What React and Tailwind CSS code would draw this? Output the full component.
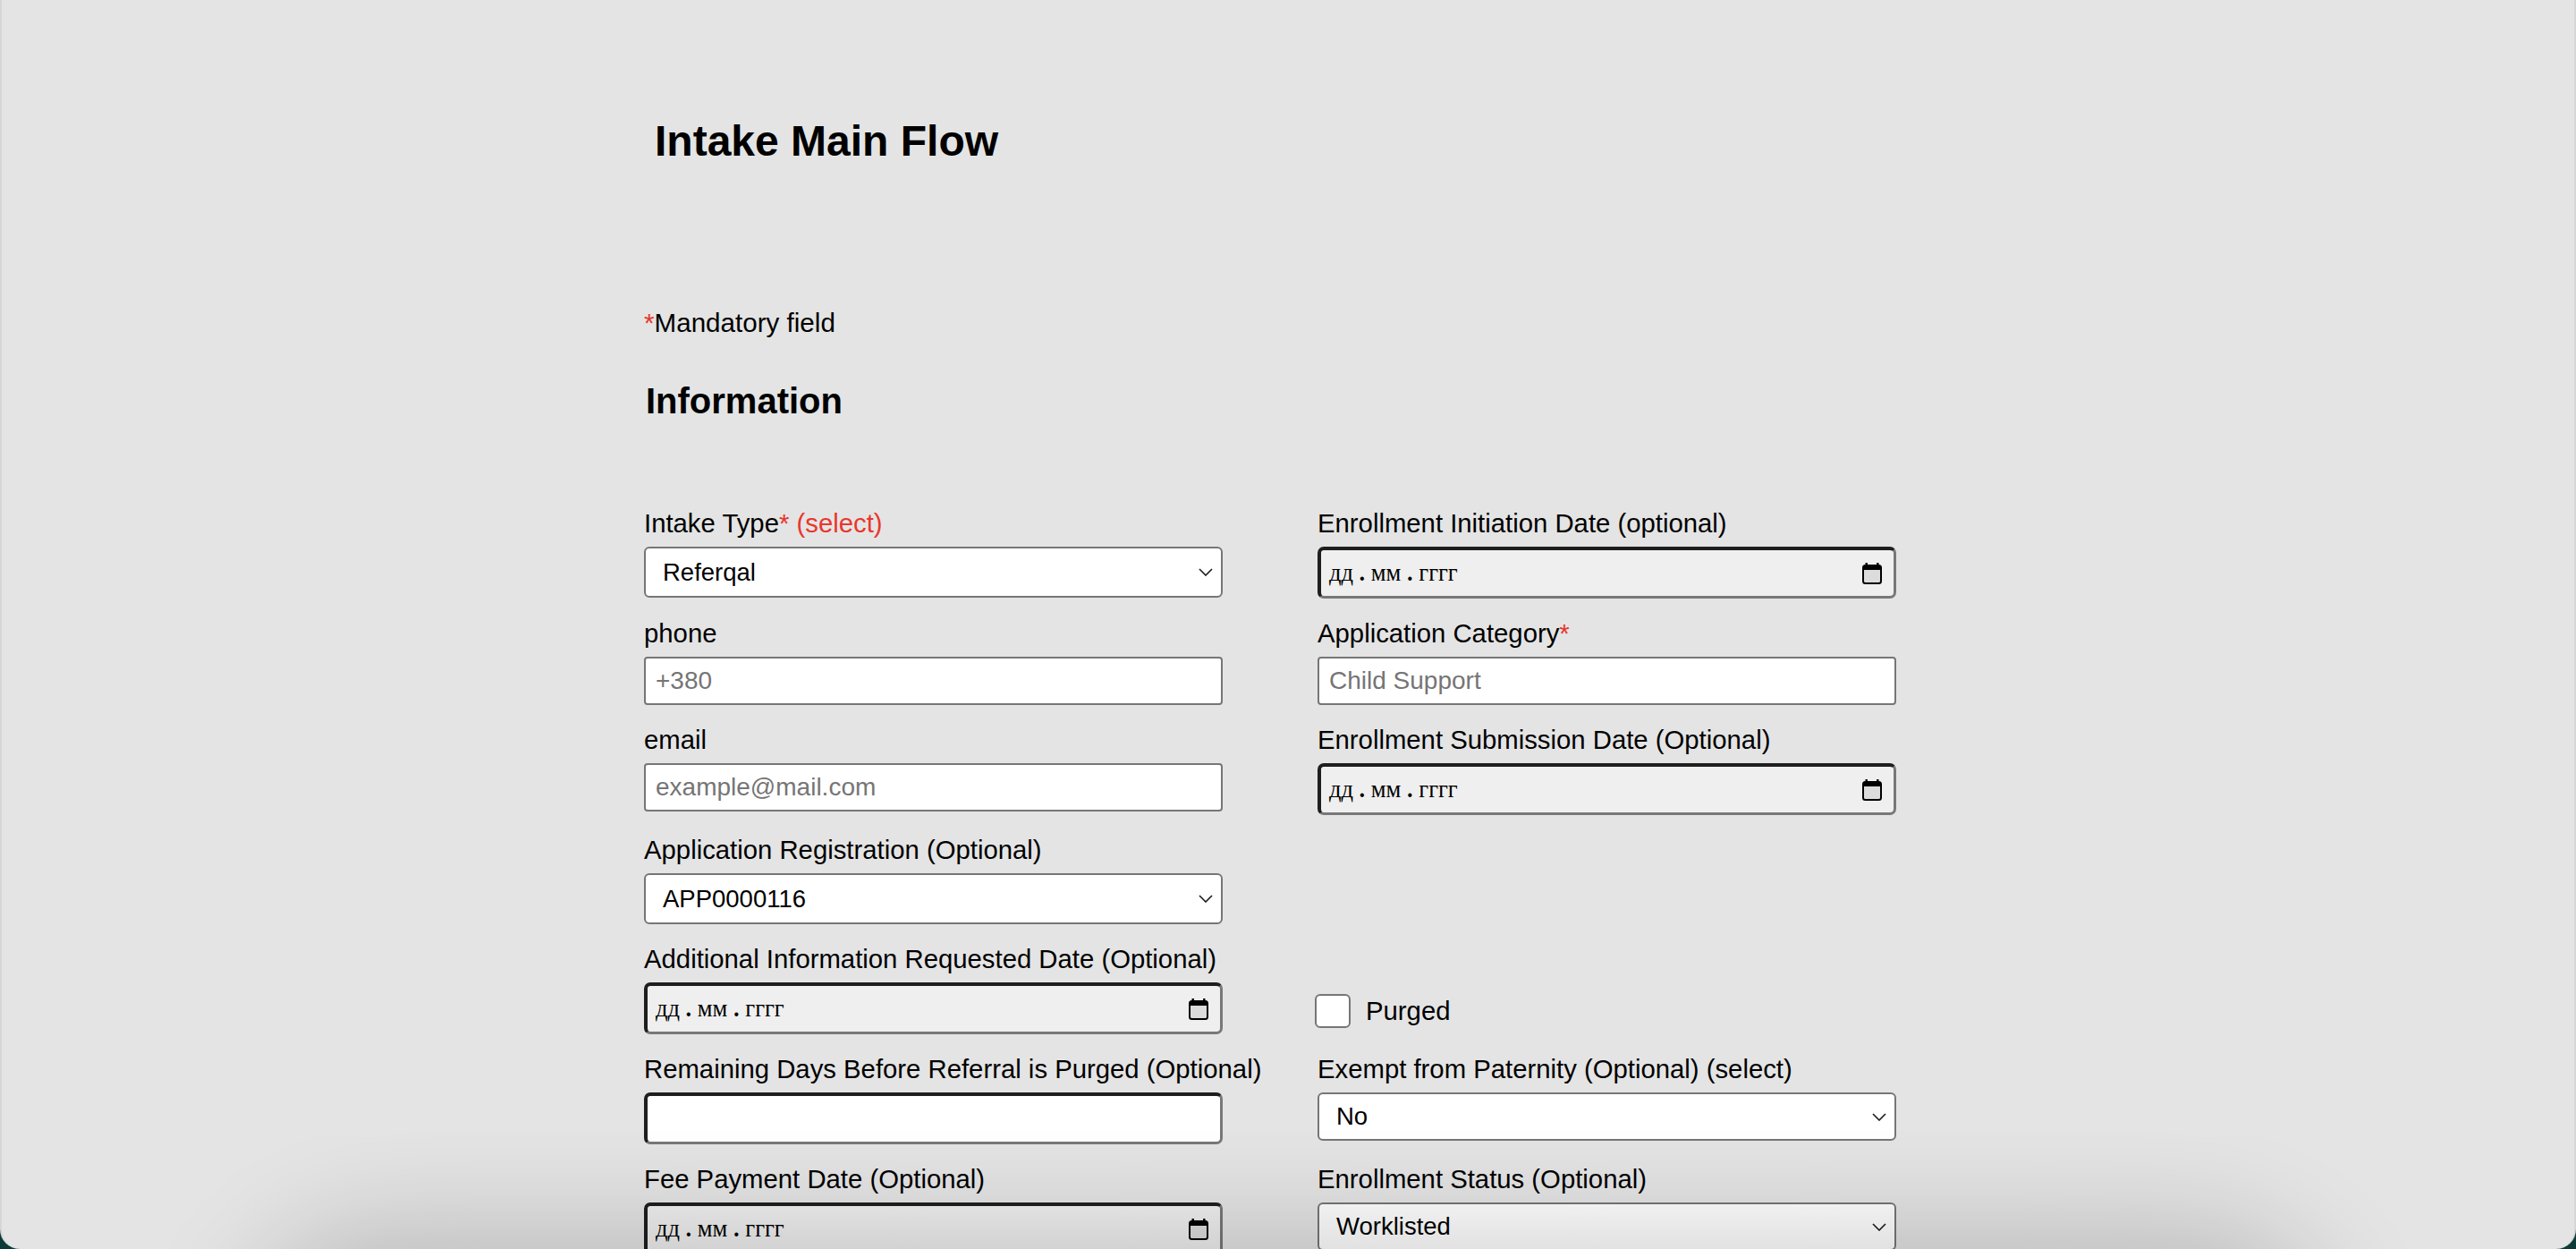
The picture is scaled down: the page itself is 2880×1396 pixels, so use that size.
import React from "react";

const Chevron = () => (
  <svg width="16" height="9" viewBox="0 0 16 9" fill="none">
    <path d="M1 1 L8 8 L15 1" stroke="#1a1a1a" strokeWidth="1.6" />
  </svg>
);

const CalendarIcon = () => (
  <svg width="22" height="25" viewBox="0 0 22 25" fill="none">
    <rect x="1" y="4" width="20" height="20" rx="2.5" fill="#dcdcdc" stroke="#000" strokeWidth="2" />
    <rect x="1" y="4" width="20" height="5" fill="#000" />
    <rect x="3.5" y="1" width="2.4" height="4" fill="#000" />
    <rect x="16.1" y="1" width="2.4" height="4" fill="#000" />
  </svg>
);

const Label = ({ children }) => (
  <label className="block text-[29.3px] leading-[40px] mb-[6px] text-black whitespace-nowrap">
    {children}
  </label>
);

const Req = () => <span className="text-[#e8372c]">*</span>;

const Select = ({ value, h = "h-[57px]" }) => (
  <div
    className={`${h} flex items-center justify-between bg-white border-2 border-[#767676] rounded-[6px] pl-[19px] pr-[9px] text-[27.5px] text-black`}
  >
    <span>{value}</span>
    <Chevron />
  </div>
);

const TextInput = ({ placeholder }) => (
  <div className="h-[54px] flex items-center bg-white border-2 border-[#767676] rounded-[4px] pl-[11px] text-[28px] text-[#757575]">
    {placeholder}
  </div>
);

const DateInput = () => (
  <div className="h-[58px] flex items-center justify-between bg-[#efefef] border-t-4 border-l-4 border-r-[3px] border-b-[3px] border-t-[#1e1e1e] border-l-[#1e1e1e] border-r-[#787878] border-b-[#787878] rounded-[7px] pl-[9px] pr-[13px]">
    <span className="font-['Liberation_Serif',serif] text-[26.5px] text-black">
      дд <b>.</b> мм <b>.</b> гггг
    </span>
    <CalendarIcon />
  </div>
);

const InsetInput = () => (
  <div className="h-[58px] bg-white border-t-4 border-l-4 border-r-[3px] border-b-[3px] border-t-[#1e1e1e] border-l-[#1e1e1e] border-r-[#787878] border-b-[#787878] rounded-[7px]" />
);

const Field = ({ label, children }) => (
  <div className="flex flex-col">
    <Label>{label}</Label>
    {children}
  </div>
);

export default function App() {
  return (
    <div className="w-[2880px] h-[1396px] bg-[#0e3b38] overflow-hidden font-['Liberation_Sans',Arial,sans-serif]">
      <div className="relative w-full h-full bg-[#e4e4e4] rounded-b-[22px] border-x-2 border-[#d6d6d6] overflow-hidden">
        <div className="w-[1440px] mx-auto pt-[129px]">
          <h1 className="pl-[12px] text-[48px] leading-[58px] font-bold text-black">
            Intake Main Flow
          </h1>

          <p className="mt-[152px] text-[29.6px] leading-[44px] text-black">
            <Req />
            Mandatory field
          </p>

          <h2 className="mt-[41px] pl-[2px] text-[40px] leading-[48px] font-bold text-black">
            Information
          </h2>

          <div className="mt-[93px] grid grid-cols-[647px_647px] gap-x-[106px] gap-y-[19px]">
            <Field
              label={
                <>
                  Intake Type<Req />{" "}
                  <span className="text-[#e8372c]">(select)</span>
                </>
              }
            >
              <Select value="Referqal" />
            </Field>
            <Field label="Enrollment Initiation Date (optional)">
              <DateInput />
            </Field>

            <Field label="phone">
              <TextInput placeholder="+380" />
            </Field>
            <Field
              label={
                <>
                  Application Category<Req />
                </>
              }
            >
              <TextInput placeholder="Child Support" />
            </Field>

            <Field label="email">
              <TextInput placeholder="example@mail.com" />
            </Field>
            <Field label="Enrollment Submission Date (Optional)">
              <DateInput />
            </Field>

            <Field label="Application Registration (Optional)">
              <Select value="APP0000116" />
            </Field>
            <div />

            <Field label="Additional Information Requested Date (Optional)">
              <DateInput />
            </Field>
            <div className="flex flex-col justify-end">
              <div className="h-[58px] flex items-center gap-[17px] pt-[5px] -ml-[3px]">
                <div className="w-[40px] h-[38px] bg-white border-2 border-[#767676] rounded-[6px]" />
                <span className="text-[29.3px] text-black">Purged</span>
              </div>
            </div>

            <Field label="Remaining Days Before Referral is Purged (Optional)">
              <InsetInput />
            </Field>
            <Field label="Exempt from Paternity (Optional) (select)">
              <Select value="No" h="h-[54px]" />
            </Field>

            <Field label="Fee Payment Date (Optional)">
              <DateInput />
            </Field>
            <Field label="Enrollment Status (Optional)">
              <Select value="Worklisted" h="h-[54px]" />
            </Field>
          </div>
        </div>

        <div className="pointer-events-none absolute left-[340px] right-[340px] top-[1450px] h-[200px] rounded-[80px] shadow-[0_0_130px_70px_rgba(0,0,0,0.2)]" />
      </div>
    </div>
  );
}
